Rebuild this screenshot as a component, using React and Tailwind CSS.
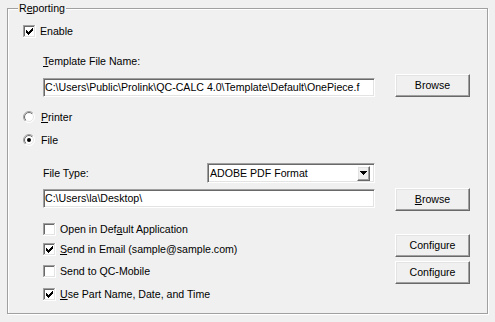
import React from "react";

const sunken =
  "bg-white border border-t-[#a0a0a0] border-l-[#a0a0a0] border-r-white border-b-white shadow-[inset_1px_1px_0_#696969,inset_-1px_-1px_0_#e3e3e3]";
const raised =
  "bg-[#f0f0f0] border border-t-white border-l-white border-r-[#696969] border-b-[#696969] shadow-[inset_-1px_-1px_0_#a0a0a0,inset_1px_1px_0_#e3e3e3]";

function CheckBox({ checked }) {
  const ys = [5, 6, 7, 6, 5, 4, 3];
  return (
    <svg width="13" height="13" viewBox="0 0 13 13" shapeRendering="crispEdges" className="shrink-0">
      <rect x="0" y="0" width="13" height="13" fill="#fff" />
      <path d="M0 0h12v1H1v11H0z" fill="#a0a0a0" />
      <path d="M1 1h10v1H2v9H1z" fill="#696969" />
      <path d="M12 0h1v13H0v-1h12z" fill="#fff" />
      <path d="M11 1h1v11H1v-1h10z" fill="#e3e3e3" />
      {checked &&
        ys.map((y, i) => <rect key={i} x={3 + i} y={y} width="1" height="3" fill="#000" />)}
    </svg>
  );
}

function Radio({ checked, id }) {
  return (
    <svg width="12" height="12" viewBox="0 0 12 12" className="shrink-0">
      <defs>
        <linearGradient id={id + "o"} x1="0" y1="0" x2="1" y2="1">
          <stop offset="0.5" stopColor="#a0a0a0" />
          <stop offset="0.5" stopColor="#ffffff" />
        </linearGradient>
        <linearGradient id={id + "i"} x1="0" y1="0" x2="1" y2="1">
          <stop offset="0.5" stopColor="#696969" />
          <stop offset="0.5" stopColor="#e3e3e3" />
        </linearGradient>
      </defs>
      <circle cx="6" cy="6" r="5.5" fill="#fff" stroke={`url(#${id}o)`} strokeWidth="1" />
      <circle cx="6" cy="6" r="4.5" fill="none" stroke={`url(#${id}i)`} strokeWidth="1" />
      {checked && <circle cx="6" cy="6" r="2" fill="#000" />}
    </svg>
  );
}

function Button({ children }) {
  return (
    <div className={`w-[75px] h-[23px] shrink-0 flex items-center justify-center ${raised}`}>
      {children}
    </div>
  );
}

function CheckRow({ checked, children, className = "" }) {
  return (
    <div className={`h-[14px] flex items-center gap-[4px] ${className}`}>
      <CheckBox checked={checked} />
      <span className="whitespace-nowrap">{children}</span>
    </div>
  );
}

export default function App() {
  return (
    <div className="w-[495px] h-[322px] bg-[#f0f0f0] pt-[8px] pl-[7px] text-[10.6px] leading-none text-black font-['Liberation_Sans',Arial,sans-serif]">
      <div className="relative w-[481px] h-[306px] border border-[#a0a0a0] shadow-[1px_1px_0_#fff,inset_1px_1px_0_#fff] flex flex-col">
        <div className="absolute left-[10px] -top-[8px] px-[1px] h-[14px] leading-[14px] bg-[#f0f0f0]">
          R<u>e</u>porting
        </div>

        <CheckRow checked className="mt-[15px] ml-[15px]">Enable</CheckRow>

        <div className="mt-[16px] ml-[35px] h-[14px] flex items-center">
          <span><u>T</u>emplate File Name:</span>
        </div>

        <div className="mt-[6px] ml-[35px] flex">
          <div className={`w-[332px] h-[19px] mt-[4px] flex items-center px-[1px] overflow-hidden whitespace-nowrap ${sunken}`}>
            C:\Users\Public\Prolink\QC-CALC 4.0\Template\Default\OnePiece.f
          </div>
          <div className="ml-[20px]">
            <Button>Browse</Button>
          </div>
        </div>

        <div className="mt-[13px] ml-[15px] h-[14px] flex items-center gap-[6px]">
          <Radio id="r1" />
          <span><u>P</u>rinter</span>
        </div>
        <div className="mt-[9px] ml-[15px] h-[14px] flex items-center gap-[6px]">
          <Radio id="r2" checked />
          <span>File</span>
        </div>

        <div className="mt-[16px] ml-[35px] flex items-center">
          <span className="w-[164px]">File Type:</span>
          <div className={`w-[168px] h-[20px] flex items-center ${sunken}`}>
            <span className="flex-1 pl-[2px] whitespace-nowrap">ADOBE PDF Format</span>
            <div className={`w-[13px] h-[15px] mr-[4px] flex items-center justify-center ${raised}`}>
              <svg width="7" height="4" viewBox="0 0 7 4" shapeRendering="crispEdges">
                <path d="M0 0h7v1H6v1H5v1H4v1H3V3H2V2H1V1H0z" fill="#000" />
              </svg>
            </div>
          </div>
        </div>

        <div className="mt-[5px] ml-[35px] flex">
          <div className={`w-[332px] h-[19px] mt-[1px] flex items-center px-[1px] overflow-hidden whitespace-nowrap ${sunken}`}>
            C:\Users\la\Desktop\
          </div>
          <div className="ml-[20px]">
            <Button><span><u>B</u>rowse</span></Button>
          </div>
        </div>

        <div className="ml-[35px] flex">
          <div className="w-[352px] flex flex-col">
            <CheckRow className="mt-[11px]">Open in Def<u>a</u>ult Application</CheckRow>
            <CheckRow checked className="mt-[6px]"><u>S</u>end in Email (sample@sample.com)</CheckRow>
            <CheckRow className="mt-[8px]">Send to QC-Mobile</CheckRow>
            <CheckRow checked className="mt-[9px]"><u>U</u>se Part Name, Date, and Time</CheckRow>
          </div>
          <div className="mt-[23px] flex flex-col gap-[4px]">
            <Button>Configure</Button>
            <Button>Configure</Button>
          </div>
        </div>
      </div>
    </div>
  );
}
